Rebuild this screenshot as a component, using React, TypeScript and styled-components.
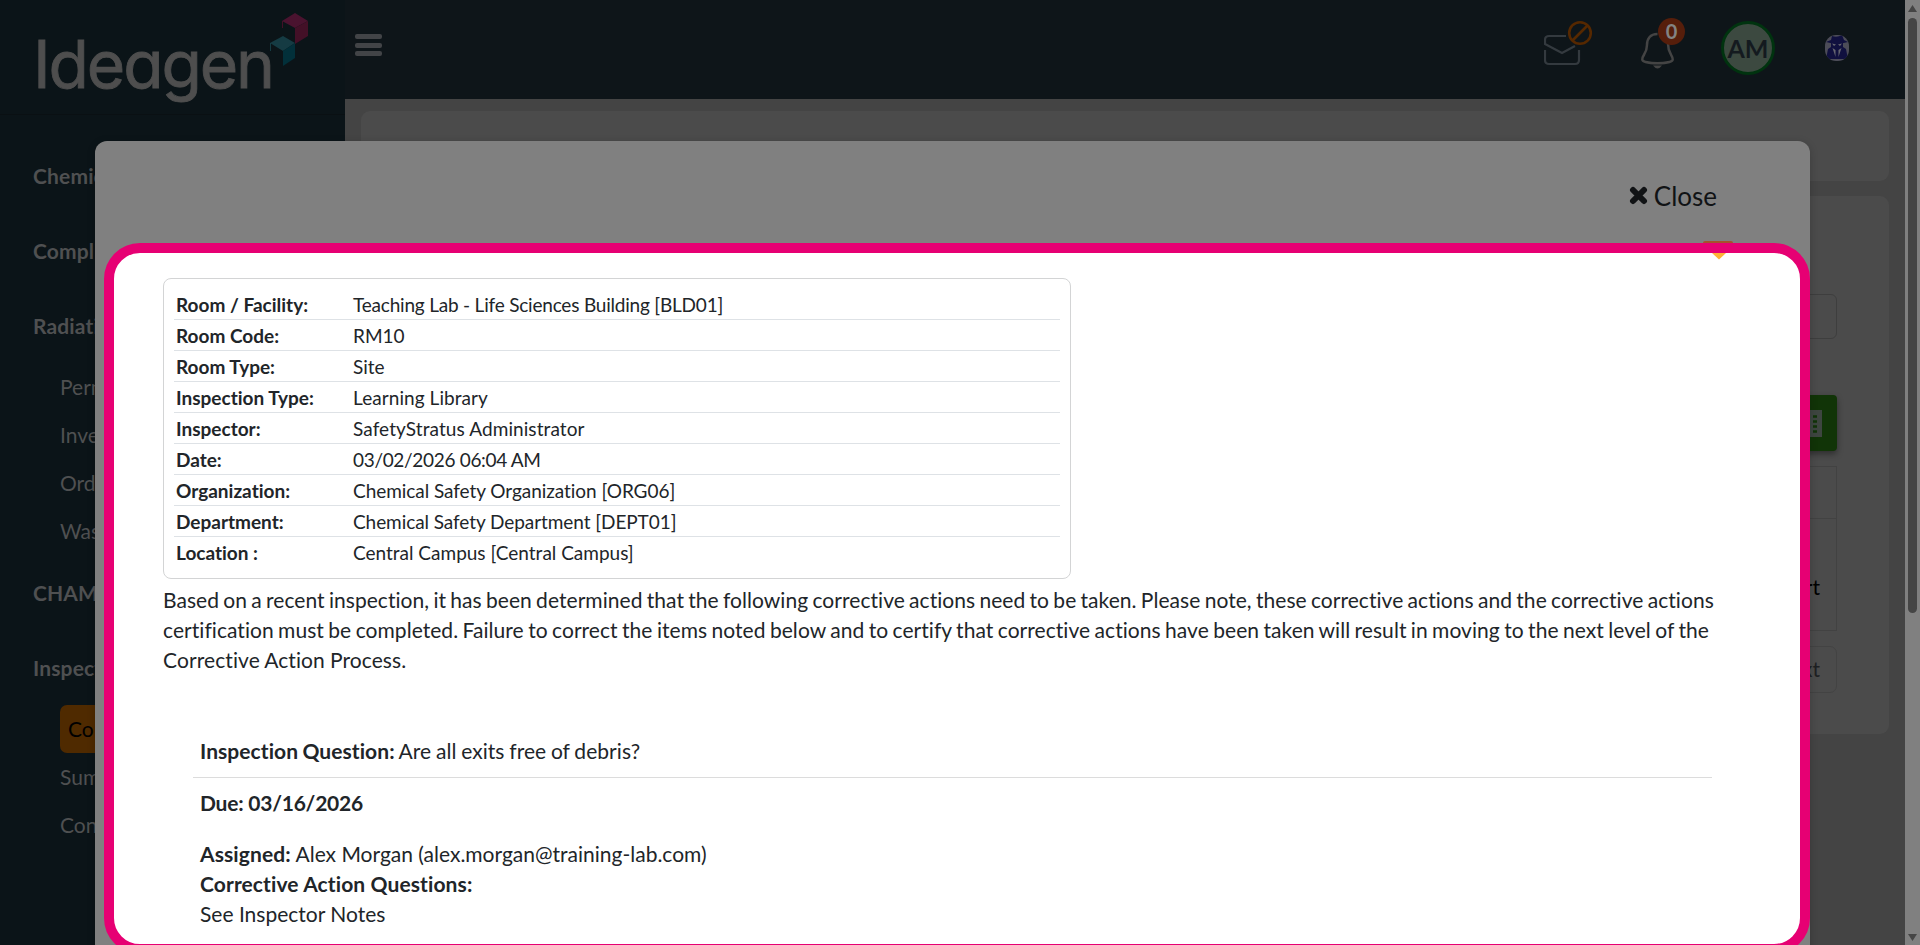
import React from 'react';
import styled, { createGlobalStyle } from 'styled-components';

const Global = createGlobalStyle`
  * { box-sizing: border-box; }
  html, body { margin: 0; height: 945px; overflow: hidden; }
  body {
    font-family: Lato, "Open Sans", sans-serif; font-size: 21px; line-height: 30px; color: #212529; background: #444;
    font-variant-ligatures: none;
  }
`;

const Page = styled.div`position: relative; display: flex; width: 1920px; height: 945px; overflow: hidden;`;
const Sidebar = styled.aside`width: 345px; flex: none; background: #0b1418; color: #4f5051;`;
const Brand = styled.div`height: 115px; border-bottom: 1px solid #0a1013;`;
const Nav = styled.nav`padding: 38px 18px 0 33px;`;
const NavGroup = styled.div`
  height: 45px; line-height: 45px; margin-bottom: 30px; font-weight: 700; letter-spacing: 0.15px; white-space: nowrap;
`;
const NavList = styled.div`margin: -15px 0 15px 27px;`;
const NavItem = styled.div<{ $active?: boolean }>`
  height: 48px; line-height: 48px; white-space: nowrap; border-radius: 7px;
  ${p => p.$active && 'background: #4f2a00; color: #000; padding-left: 8px;'}
`;

const Main = styled.div`flex: 1; min-width: 0; background: #444; display: flex; flex-direction: column;`;
const Header = styled.header`
  height: 99px; flex: none; background: #0e1519; display: flex; justify-content: space-between; align-items: flex-start;
  padding: 0 56px 0 10px;
`;
const Burger = styled.div`width: 27px; margin-top: 34px; display: grid; gap: 3.7px;`;
const BurgerBar = styled.i`height: 5px; border-radius: 2px; background: #424447;`;
const HeaderIcons = styled.div`display: flex; align-items: flex-start;`;
const MailIcon = styled.svg`width: 60px; height: 60px; margin: 15px 36px 0 0;`;
const BellBox = styled.div`position: relative; width: 46px; height: 75px; margin-right: 35px;`;
const Count = styled.span`
  position: absolute; left: 18px; top: 18px; width: 27px; height: 27px; border-radius: 50%;
  background: #561e0b; color: #838383; font-size: 20px; font-weight: 700; line-height: 27px; text-align: center;
`;
const Avatar = styled.div`
  width: 54px; height: 54px; margin: 21px 50px 0 0; border: 3px solid #00330f; border-radius: 50%;
  background: #3c4940; color: #141a1f; font-size: 25px; font-weight: 700; line-height: 48px; text-align: center;
`;
const Spy = styled.svg`width: 24px; height: 26px; margin-top: 35px;`;

const Content = styled.div`padding: 12px 16px 0; display: grid; gap: 15px;`;
const BlankCard = styled.section`height: 70px; border-radius: 9px; background: #4b4b4b;`;
const Card = styled.section`
  height: 538px; border-radius: 9px; background: #4b4b4b; padding: 98px 52px 0 0;
  display: flex; flex-direction: column; align-items: flex-end;
`;
const Field = styled.div`width: 200px; height: 45px; border: 1px solid #3e3e3e; border-radius: 6px;`;
const ExportButton = styled.div`
  width: 70px; height: 56px; margin: 56px 0 15px; border-radius: 4px; background: #113407; box-shadow: 0 3px 6px #0006;
  display: flex; align-items: center; justify-content: flex-end; padding-right: 15px;
`;
const TableHead = styled.div`width: 400px; height: 53px; border: 1px solid #424242;`;
const TableCell = styled.div`
  width: 400px; height: 112px; border: 1px solid #424242; border-top: 0; color: #000; text-align: right;
  padding: 53px 16px 0 0;
`;
const NextButton = styled.div`
  width: 86px; height: 47px; margin-top: 15px; border: 1px solid #434343; border-radius: 7px;
  color: #1e2022; text-align: right; line-height: 44px; padding-right: 16px;
`;

const ScrollTrack = styled.div`
  width: 15px; flex: none; background: #808080; display: flex; flex-direction: column; align-items: center; padding: 5px 0 4px;
`;
const ScrollThumb = styled.div`width: 9px; height: 595px; margin-top: 6px; border-radius: 5px; background: #454545;`;
const ScrollArrow = styled.svg<{ $end?: boolean }>`width: 9px; height: 7px; flex: none; ${p => p.$end && 'margin-top: auto;'}`;

const Modal = styled.div`
  position: absolute; left: 95px; top: 141px; width: 1715px; height: 830px; background: #808080;
  border-radius: 12px; box-shadow: 0 2px 8px #0003;
`;
const CloseRow = styled.div`
  display: flex; align-items: center; justify-content: flex-end; gap: 6px; padding: 35px 93px 0 0;
  height: 74px; color: #111315; font-size: 26px;
`;
const Marker = styled.i`
  position: absolute; left: 1608px; top: 100px; width: 30px; height: 3px; background: #a5522b; border-radius: 2px 2px 0 0;
`;
const Spotlight = styled.div`
  position: absolute; left: 103.5px; top: 242.5px; width: 1706px; height: 711px;
  border: 10px solid #e60073; border-radius: 36px; background: #fff; padding: 25.5px 85px 0 49.5px;
`;
const SpotMarker = styled.svg`position: absolute; left: 1598.5px; top: 0; width: 14px; height: 7px;`;

const Details = styled.div`
  width: 908px; height: 301px; border: 1px solid #d3d4d5; border-radius: 8px; padding: 10px 10px 0 10px; font-size: 19px;
`;
const DetailRow = styled.div`
  display: flex; height: 31px; line-height: 32px; padding-left: 2px; white-space: nowrap;
  &:not(:last-child) { border-bottom: 1px solid #dee2e6; }
`;
const DetailLabel = styled.b`width: 177px; flex: none;`;
const DetailValue = styled.span<{ $tracking: number }>`letter-spacing: ${p => p.$tracking}px;`;
const Notice = styled.div`margin: 6px 0 0; white-space: nowrap;`;
const NoticeLine = styled.div<{ $tracking: number; $gap: number }>`
  letter-spacing: ${p => p.$tracking}px; word-spacing: ${p => p.$gap}px;
`;
const Question = styled.div`margin: 57px 0 0 30px;`;
const Asked = styled.div`
  width: 1519px; height: 46px; line-height: 38px; padding-left: 7px; border-bottom: 1px solid #dcdcdc;
  letter-spacing: 0.06px; word-spacing: -0.75px;
`;
const Answer = styled.div`padding: 10px 0 0 7px; white-space: nowrap;`;
const AnswerLabel = styled.b`letter-spacing: 0.11px;`;
const Due = styled.div`font-weight: 700; margin-bottom: 21px; letter-spacing: -0.23px;`;

const groups: { title: string; items?: string[] }[] = [
  { title: 'Chemical' }, { title: 'Compliance' },
  { title: 'Radiation', items: ['Permits', 'Inventory', 'Orders', 'Waste'] },
  { title: 'CHAMP' },
  { title: 'Inspections', items: ['Corrective', 'Summary', 'Configure'] },
];

const details: [string, string, number][] = [
  ['Room / Facility:', 'Teaching Lab - Life Sciences Building [BLD01]', -0.2],
  ['Room Code:', 'RM10', 0],
  ['Room Type:', 'Site', 0],
  ['Inspection Type:', 'Learning Library', 0.07],
  ['Inspector:', 'SafetyStratus Administrator', 0.09],
  ['Date:', '03/02/2026 06:04 AM', -0.32],
  ['Organization:', 'Chemical Safety Organization [ORG06]', -0.05],
  ['Department:', 'Chemical Safety Department [DEPT01]', -0.07],
  ['Location :', 'Central Campus [Central Campus]', 0],
];

function Logo() {
  return (
    <svg width="345" height="114" viewBox="0 0 345 114">
      <text x="33" y="88" fill="#4e4e4e" stroke="#4e4e4e" strokeWidth="0.8" fontFamily="Inter, sans-serif" fontSize="66"
        textLength="242" lengthAdjust="spacing" style={{ fontFeatureSettings: '"cv11"' }}>Ideagen</text>
      <path d="M282 21L295 13L308 21L295 28Z" fill="#4a132f" />
      <path d="M308 21V36L295 44V28Z" fill="#431027" />
      <path d="M282.5 21V28" stroke="#431027" />
      <path d="M270 43L283 36L295 43L283 51Z" fill="#153b43" />
      <path d="M295 43V58L283 66V51Z" fill="#02303a" />
      <path d="M270.5 43V51" stroke="#153b43" />
    </svg>
  );
}

export default function App() {
  return (
    <>
      <Global />
      <Page>
        <Sidebar>
          <Brand><Logo /></Brand>
          <Nav>
            {groups.map(g => (
              <React.Fragment key={g.title}>
                <NavGroup>{g.title}</NavGroup>
                {g.items && (
                  <NavList>
                    {g.items.map(i => <NavItem key={i} $active={i === 'Corrective'}>{i}</NavItem>)}
                  </NavList>
                )}
              </React.Fragment>
            ))}
          </Nav>
        </Sidebar>
        <Main>
          <Header>
            <Burger><BurgerBar /><BurgerBar /><BurgerBar /></Burger>
            <HeaderIcons>
              <MailIcon viewBox="0 0 60 60" fill="none" stroke="#343a3f" strokeWidth="2.2">
                <path d="M22 21H5Q1 21 1 25V29L18 38L31 31M1 35V45Q1 49 5 49H31Q35 49 35 45V35" />
                <g stroke="#562800" strokeWidth="2.6"><circle cx="36" cy="18" r="10.8" /><path d="M28.500 25.500L43.500 10.500" /></g>
              </MailIcon>
              <BellBox>
                <svg width="46" height="75" viewBox="0 0 46 75" fill="none" stroke="#444" strokeWidth="2.5">
                  <path d="M17.500 34C10 34 7 39 7 45C7 54 2 55 2.300 59.500C2.500 64.500 32.500 64.500 32.700 59.500C33 55 28 54 28 44" />
                  <path d="M13 65.500H22Q17.500 71.500 13 65.500Z" fill="#444" stroke="none" />
                </svg>
                <Count>0</Count>
              </BellBox>
              <Avatar>AM</Avatar>
              <Spy viewBox="0 0 24 26">
                <clipPath id="badge"><rect width="24" height="26" rx="11" /></clipPath>
                <g clipPath="url(#badge)">
                  <path d="M0 0H24V26H0Z" fill="#4c4c58" />
                  <path d="M7 1Q12 3 17 0L19 5L23 7Q12 10 1 7L6 5Z" fill="#10103f" />
                  <path d="M6 8H18V12L21 14L23 24H1L3 14L6 12Z" fill="#10103f" />
                  <path d="M7 8.500L11 9.500L9 11ZM17 8.500L13 9.500L15 11ZM7.500 13L10.500 15V22ZM16.500 13L13.500 15V22Z" fill="#666670" />
                </g>
              </Spy>
            </HeaderIcons>
          </Header>
          <Content>
            <BlankCard />
            <Card>
              <Field />
              <ExportButton>
                <svg width="24" height="27" viewBox="0 0 24 27"><path d="M0 0H24V27H0Z" fill="#3e4540" />
                  <path d="M7 6.500H12M15 6.500H19M7 11.500H12M15 11.500H19M7 16.500H12M15 16.500H19M7 21.500H12M15 21.500H19" stroke="#113407" strokeWidth="2.500" /></svg>
              </ExportButton>
              <TableHead />
              <TableCell>Report</TableCell>
              <NextButton>Next</NextButton>
            </Card>
          </Content>
        </Main>
        <ScrollTrack>
          <ScrollArrow viewBox="0 0 9 7"><path d="M4.500 0L9 7H0Z" fill="#454545" /></ScrollArrow>
          <ScrollThumb />
          <ScrollArrow $end viewBox="0 0 9 7"><path d="M0 0H9L4.500 7Z" fill="#454545" /></ScrollArrow>
        </ScrollTrack>

        <Modal>
          <CloseRow>
            <svg width="19" height="19" viewBox="0 0 19 19"><path d="M4 4L15 15M15 4L4 15" stroke="#111315" strokeWidth="6" strokeLinecap="round" /></svg>
            Close
          </CloseRow>
          <Marker />
        </Modal>
        <Spotlight>
          <SpotMarker viewBox="0 0 14 7"><path d="M0 0H14L7 6.500Z" fill="#ffb236" /></SpotMarker>
          <Details>
            {details.map(([k, v, t]) => (
              <DetailRow key={k}><DetailLabel>{k}</DetailLabel><DetailValue $tracking={t}>{v}</DetailValue></DetailRow>
            ))}
          </Details>
          <Notice>
            <NoticeLine $tracking={0.05} $gap={-1.17}>Based on a recent inspection, it has been determined that the following corrective actions need to be taken. Please note, these corrective actions and the corrective actions</NoticeLine>
            <NoticeLine $tracking={0.05} $gap={-1.03}>certification must be completed. Failure to correct the items noted below and to certify that corrective actions have been taken will result in moving to the next level of the</NoticeLine>
            <NoticeLine $tracking={0.1} $gap={-0.5}>Corrective Action Process.</NoticeLine>
          </Notice>
          <Question>
            <Asked><b>Inspection Question:</b> Are all exits free of debris?</Asked>
            <Answer>
              <Due>Due: 03/16/2026</Due>
              <div><AnswerLabel>Assigned:</AnswerLabel> Alex Morgan (alex.morgan@training-lab.com)</div>
              <AnswerLabel>Corrective Action Questions:</AnswerLabel>
              <div>See Inspector Notes</div>
            </Answer>
          </Question>
        </Spotlight>
      </Page>
    </>
  );
}
